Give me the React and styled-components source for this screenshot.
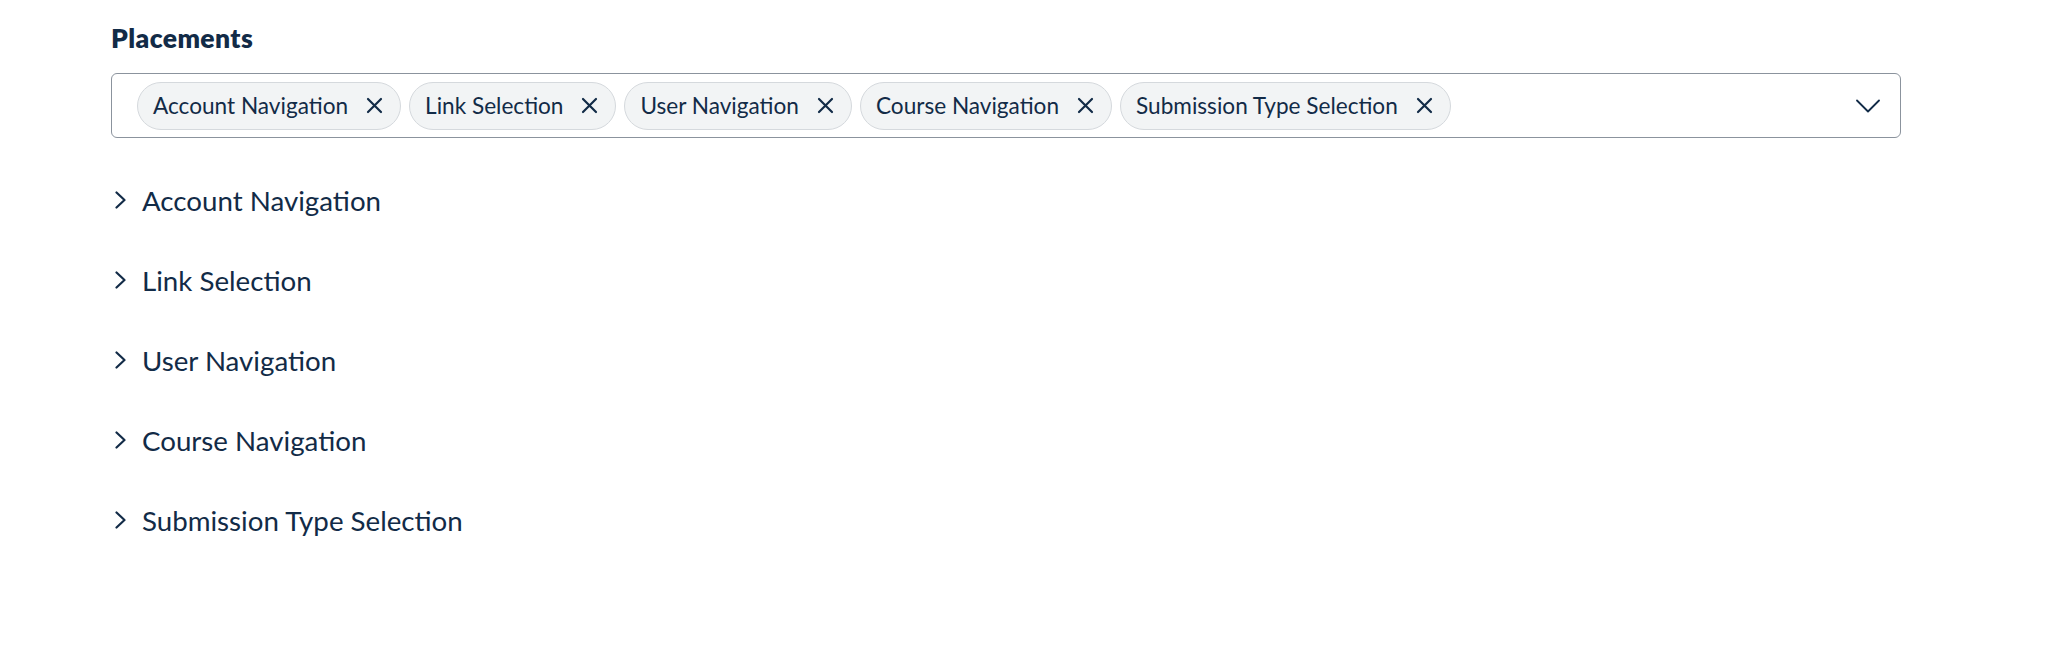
import styled, { createGlobalStyle } from "styled-components";

const GlobalStyle = createGlobalStyle`
  body {
    margin: 0;
    background: #ffffff;
    font-family: Lato, "Liberation Sans", sans-serif;
    color: #122b47;
  }
`;

const placements = [
  "Account Navigation",
  "Link Selection",
  "User Navigation",
  "Course Navigation",
  "Submission Type Selection",
];

const Page = styled.div`
  padding: 22px 0 0 111px;
  width: 1790px;
`;

const Heading = styled.h2`
  margin: 0;
  font-size: 26.5px;
  line-height: 32px;
  font-weight: 800;
  letter-spacing: 0.4px;
  color: #122b47;
`;

const SelectBox = styled.div`
  margin-top: 19px;
  height: 65px;
  box-sizing: border-box;
  border: 1.5px solid #8b939d;
  border-radius: 6px;
  display: flex;
  align-items: center;
  padding: 0 20px 0 25px;
`;

const Tags = styled.div`
  display: flex;
  gap: 8px;
  flex: 1;
`;

const Tag = styled.span`
  display: inline-flex;
  align-items: center;
  height: 48px;
  box-sizing: border-box;
  padding: 0 17px 0 15px;
  gap: 18px;
  border: 1px solid #d5d9dd;
  border-radius: 24px;
  background: #f2f4f5;
  font-size: 22.6px;
  color: #122b47;
`;

const CloseIcon = () => (
  <svg width="17" height="17" viewBox="0 0 17 17">
    <path d="M2 2 L15 15 M15 2 L2 15" stroke="#122b47" strokeWidth="2.2" strokeLinecap="round" fill="none" />
  </svg>
);

const ChevronDown = () => (
  <svg width="24" height="14" viewBox="0 0 24 14">
    <path d="M1 1.5 L12 12.5 L23 1.5" stroke="#122b47" strokeWidth="1.8" fill="none" strokeLinecap="round" strokeLinejoin="round" />
  </svg>
);

const ChevronRight = () => (
  <svg width="11" height="18" viewBox="0 0 11 18">
    <path d="M1.5 1.5 L9.5 9 L1.5 16.5" stroke="#122b47" strokeWidth="2.2" fill="none" strokeLinecap="round" strokeLinejoin="round" />
  </svg>
);

const Accordion = styled.div`
  margin-top: 22px;
  display: flex;
  flex-direction: column;
`;

const Row = styled.div`
  height: 80px;
  display: flex;
  align-items: center;
  gap: 16px;
  padding-left: 4px;
  font-size: 27.7px;
  color: #122b47;
`;

export default function App() {
  return (
    <>
      <GlobalStyle />
      <Page>
        <Heading>Placements</Heading>
        <SelectBox>
          <Tags>
            {placements.map((p) => (
              <Tag key={p}>
                {p}
                <CloseIcon />
              </Tag>
            ))}
          </Tags>
          <ChevronDown />
        </SelectBox>
        <Accordion>
          {placements.map((p) => (
            <Row key={p}>
              <ChevronRight />
              {p}
            </Row>
          ))}
        </Accordion>
      </Page>
    </>
  );
}
